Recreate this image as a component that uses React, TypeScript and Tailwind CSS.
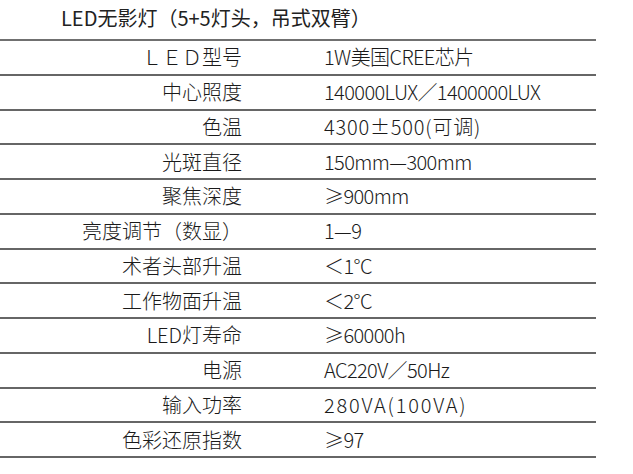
import React from "react";

const rows: { label: string; value: string; track: string }[] = [
  { label: "ＬＥＤ型号", value: "1W美国CREE芯片", track: "tracking-[-0.6px]" },
  { label: "中心照度", value: "140000LUX／1400000LUX", track: "tracking-[-0.6px]" },
  { label: "色温", value: "4300±500(可调)", track: "tracking-[0.8px]" },
  { label: "光斑直径", value: "150mm—300mm", track: "tracking-[-0.6px]" },
  { label: "聚焦深度", value: "≥900mm", track: "tracking-[-0.6px]" },
  { label: "亮度调节（数显）", value: "1—9", track: "tracking-[-0.6px]" },
  { label: "术者头部升温", value: "＜1°C", track: "tracking-[-0.6px]" },
  { label: "工作物面升温", value: "＜2°C", track: "tracking-[-0.6px]" },
  { label: "LED灯寿命", value: "≥60000h", track: "tracking-[-0.6px]" },
  { label: "电源", value: "AC220V／50Hz", track: "tracking-[-0.6px]" },
  { label: "输入功率", value: "280VA(100VA)", track: "tracking-[1.8px]" },
  { label: "色彩还原指数", value: "≥97", track: "tracking-[-0.6px]" },
];

export default function App() {
  return (
    <div className="w-[633px] h-[474px] bg-white text-[#1a1a1a] overflow-hidden font-['Noto_Sans_CJK_SC','Noto_Sans',sans-serif]">
      <div className="h-[39px] pl-[61px] pt-[4px] text-[20px] leading-[28px] font-normal text-[#222222]">
        LED无影灯（5+5灯头，吊式双臂）
      </div>
      <div className="w-[596px] border-t-2 border-[#707070]">
        {rows.map((r, i) => (
          <div
            key={i}
            className="h-[34.75px] border-b-2 border-[#666666] flex items-center text-[20px] leading-none font-light"
          >
            <div className="w-[242px] text-right">{r.label}</div>
            <div className={"pl-[82px] " + r.track}>{r.value}</div>
          </div>
        ))}
      </div>
    </div>
  );
}
